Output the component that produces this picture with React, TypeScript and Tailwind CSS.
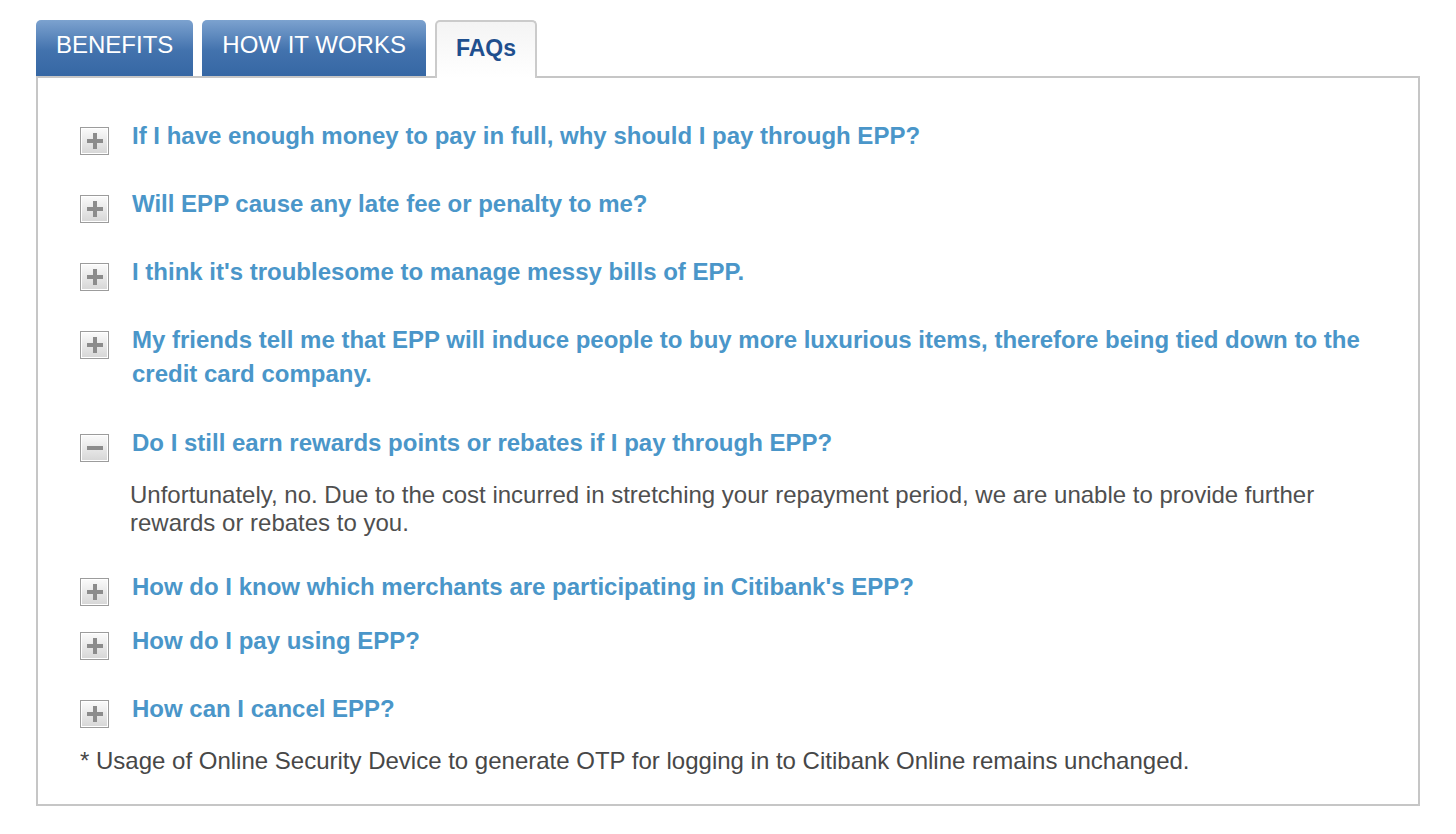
import React from 'react';

type Faq = {
    q: string;
    a?: string;
    gap: string;
};

const faqs: Faq[] = [
    { q: 'If I have enough money to pay in full, why should I pay through EPP?', gap: 'mb-[34px]' },
    { q: 'Will EPP cause any late fee or penalty to me?', gap: 'mb-[34px]' },
    { q: "I think it's troublesome to manage messy bills of EPP.", gap: 'mb-[34px]' },
    {
        q: 'My friends tell me that EPP will induce people to buy more luxurious items, therefore being tied down to the credit card company.',
        gap: 'mb-[35px]',
    },
    {
        q: 'Do I still earn rewards points or rebates if I pay through EPP?',
        a: 'Unfortunately, no. Due to the cost incurred in stretching your repayment period, we are unable to provide further rewards or rebates to you.',
        gap: 'mb-[33px]',
    },
    { q: "How do I know which merchants are participating in Citibank's EPP?", gap: 'mb-[20px]' },
    { q: 'How do I pay using EPP?', gap: 'mb-[34px]' },
    { q: 'How can I cancel EPP?', gap: 'mb-[21px]' },
];

const ToggleIcon = ({ open }: { open: boolean }) => (
    <div className="-mb-[2px] mt-[8px] flex h-[28px] w-[29px] shrink-0 items-center justify-center border border-[#9c9c9c] bg-linear-to-b from-[#fbfbfb] to-[#d6d6d6] shadow-[inset_0_0_0_1px_#ffffff]">
        {open ? (
            <div className="h-[4px] w-[16px] bg-[#8c8c8c]" />
        ) : (
            <div className="relative h-[16px] w-[16px]">
                <div className="absolute left-0 top-[6px] h-[4px] w-[16px] bg-[#8c8c8c]" />
                <div className="absolute left-[6px] top-0 h-[16px] w-[4px] bg-[#8c8c8c]" />
            </div>
        )}
    </div>
);

const tabs = ['BENEFITS', 'HOW IT WORKS', 'FAQs'];

export default function App() {
    return (
        <div className="min-h-screen bg-white px-9 pt-5 font-['Liberation_Sans',Arial,sans-serif]">
            <div className="flex items-end gap-[9px]">
                {tabs.map(tab =>
                    tab === 'FAQs' ? (
                        <div
                            key={tab}
                            className="relative z-10 -mb-[2px] flex h-[58px] items-center rounded-t-[5px] border-2 border-b-0 border-[#cbcbcb] bg-linear-to-b from-[#f4f4f4] to-white px-[19px] pb-[4px] text-[23px] font-bold text-[#1f4f8e]"
                        >
                            {tab}
                        </div>
                    ) : (
                        <div
                            key={tab}
                            className="flex h-[56px] items-center rounded-t-[5px] bg-linear-to-b from-[#7ca2cf] via-[#4272ad] via-55% to-[#3667a4] px-5 pb-[6px] text-[24px] text-white"
                        >
                            {tab}
                        </div>
                    )
                )}
            </div>

            <div className="border-2 border-[#c6c6c6] pb-[29px] pl-[42px] pr-[40px] pt-[41px]">
                {faqs.map(item => (
                    <div key={item.q} className={item.gap}>
                        <div className="flex items-start gap-[23px]">
                            <ToggleIcon open={!!item.a} />
                            <p className="text-[24px] font-bold leading-[34px] text-[#4a96c9]">{item.q}</p>
                        </div>
                        {item.a && (
                            <p className="mt-[21px] pl-[50px] text-[24px] leading-[28px] text-[#4f4f4f]">{item.a}</p>
                        )}
                    </div>
                ))}
                <p className="text-[24px] leading-[28px] text-[#474747]">
                    * Usage of Online Security Device to generate OTP for logging in to Citibank Online remains unchanged.
                </p>
            </div>
        </div>
    );
}
